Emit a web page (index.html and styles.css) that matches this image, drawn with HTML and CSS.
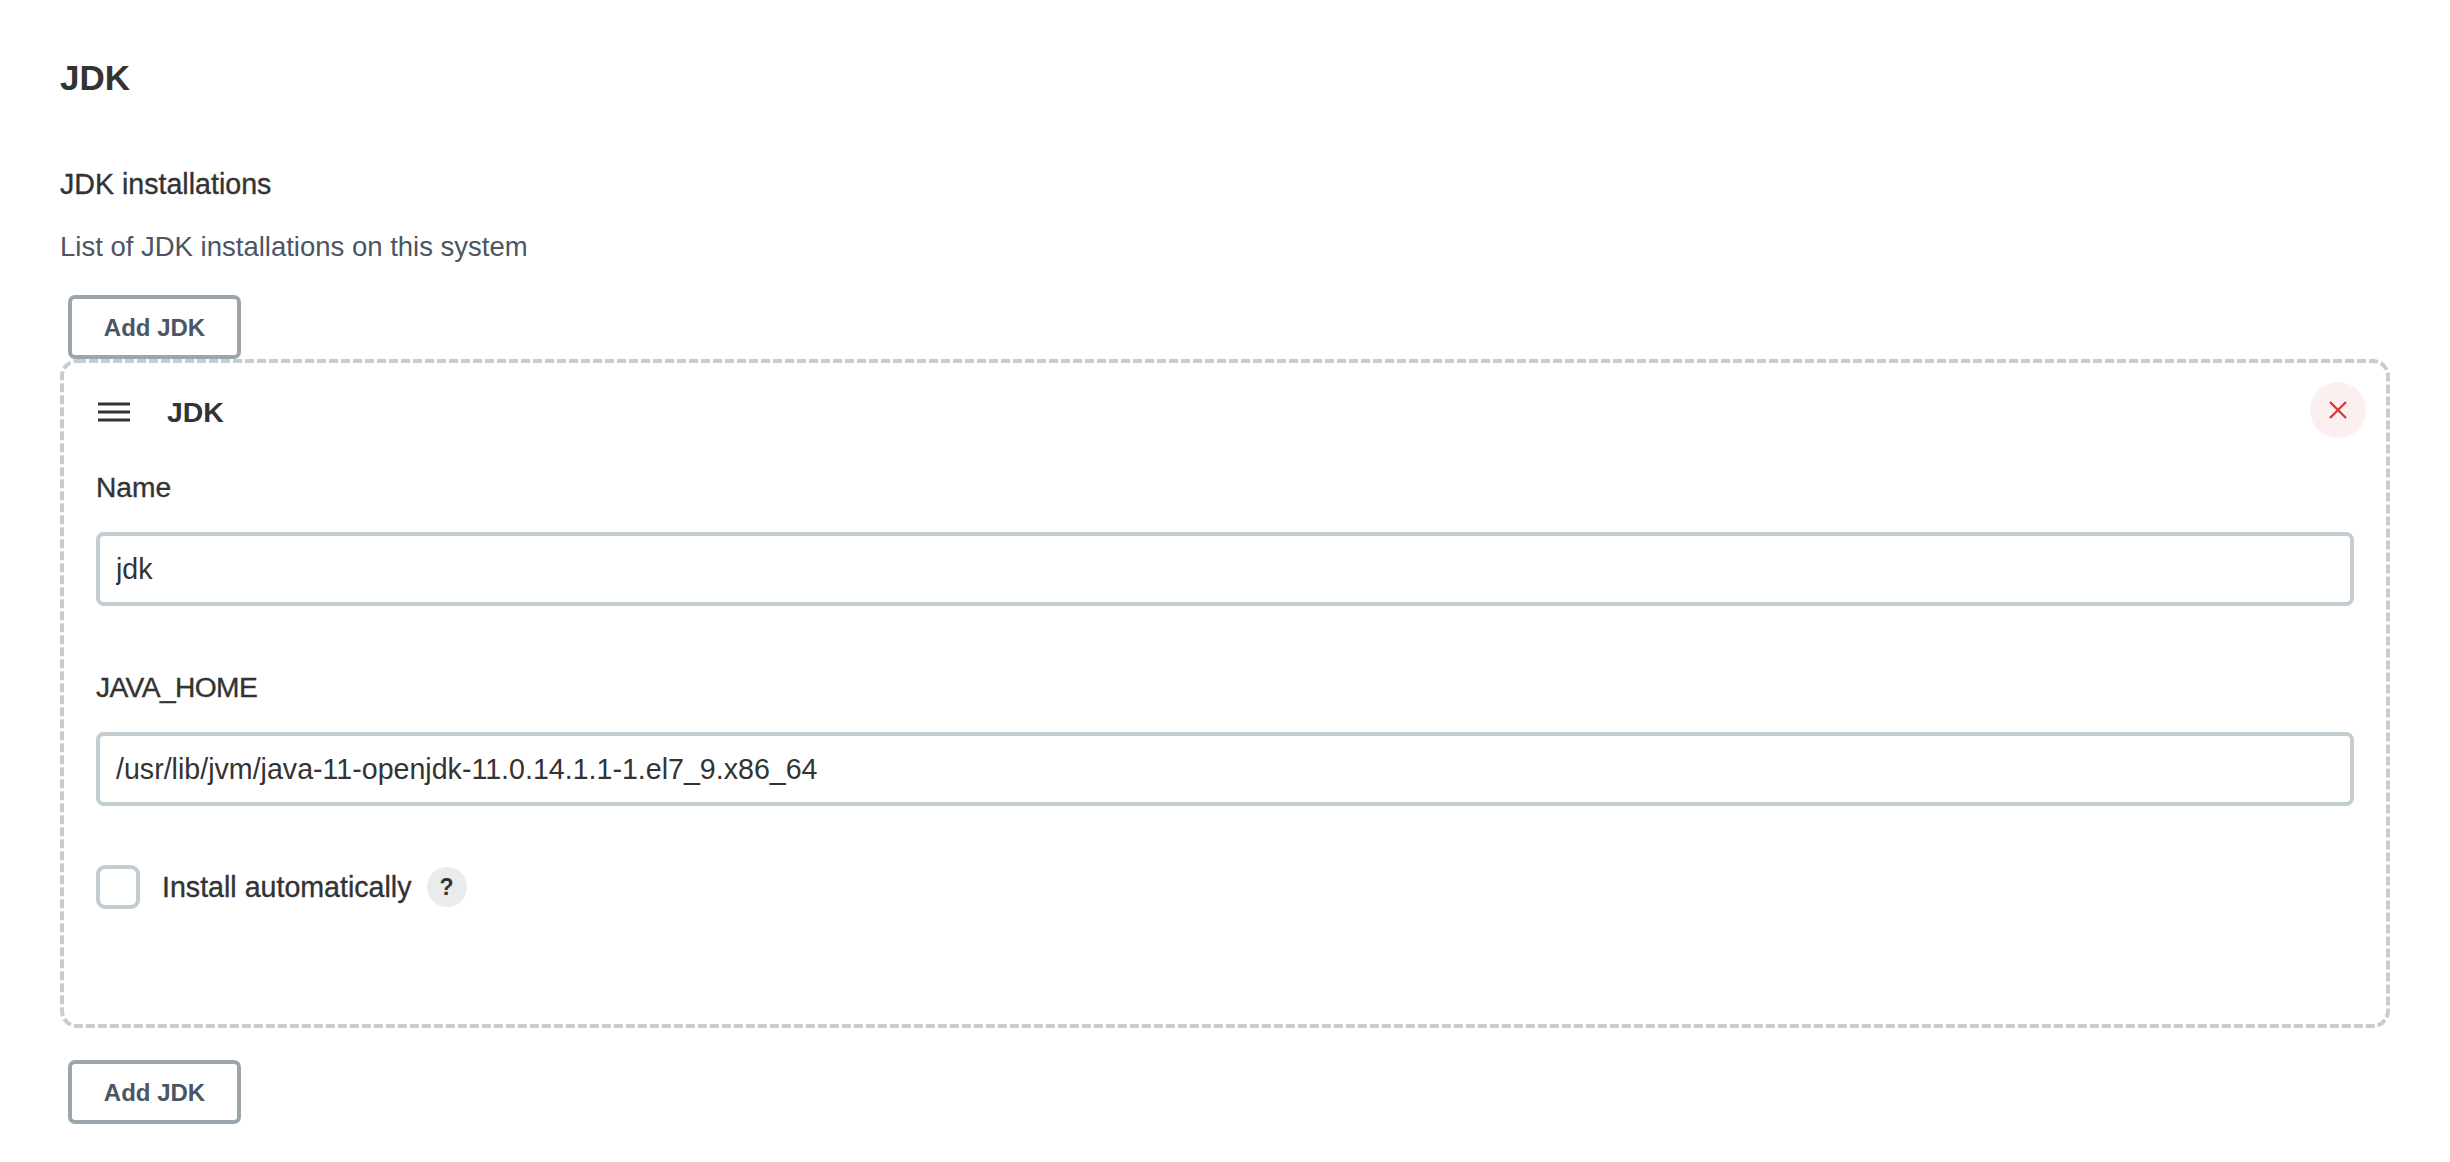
FILE: index.html
```html
<!DOCTYPE html>
<html>
<head>
    <meta name="viewport" content="width=device-width, initial-scale=1">
    <link rel="stylesheet" href="styles.css">
</head>

<body>

<div class="section">

    <h2 class="section-title">JDK</h2>

    <div class="setting-label">JDK installations</div>
    <div class="setting-desc">List of JDK installations on this system</div>

    <button type="button" class="add-btn">Add JDK</button>

    <div class="repeated">
        <svg class="dashes" width="2330" height="669" viewBox="0 0 2330 669">
            <rect x="2" y="2" width="2326" height="665" rx="15" fill="none" stroke="#c5cdd0" stroke-width="4" stroke-dasharray="9 3"/>
        </svg>

        <div class="repeated-head">
            <svg class="handle" width="32" height="20" viewBox="0 0 32 20">
                <path d="M0 2H32M0 10H32M0 18H32" stroke="#333" stroke-width="2.8" fill="none"/>
            </svg>
            <span class="repeated-title">JDK</span>
            <button type="button" class="close-btn">
                <svg width="18" height="18" viewBox="0 0 18 18">
                    <path d="M1 1L17 17M17 1L1 17" stroke="#d4342f" stroke-width="2.2" fill="none"/>
                </svg>
            </button>
        </div>

        <label class="field-label" for="name">Name</label>
        <input type="text" class="field-input" id="name" value="jdk">

        <label class="field-label field-label-caps" for="home">JAVA_HOME</label>
        <input type="text" class="field-input" id="home" value="/usr/lib/jvm/java-11-openjdk-11.0.14.1.1-1.el7_9.x86_64">

        <div class="check-row">
            <span class="check-box"></span>
            <span class="check-label">Install automatically</span>
            <span class="help">?</span>
        </div>
    </div>

    <button type="button" class="add-btn add-btn-last">Add JDK</button>

</div>

</body>
</html>
```

FILE: styles.css
```css
body {
    margin: 0;
    background-color: #fff;
    color: #333;
    font-family: "Liberation Sans", Arial, Helvetica, sans-serif;
}

.section {
    padding: 60px 60px 0 60px;
}

.section-title {
    margin: 0;
    font-size: 35px;
    line-height: 36px;
    font-weight: bold;
}

.setting-label {
    margin-top: 70px;
    font-size: 28.6px;
    line-height: 36px;
    -webkit-text-stroke: 0.35px #333;
}

.setting-desc {
    margin-top: 27px;
    font-size: 27.5px;
    line-height: 36px;
    color: #4b5563;
}

.add-btn {
    display: block;
    box-sizing: border-box;
    width: 173px;
    height: 64px;
    margin: 30px 0 0 8px;
    padding: 1px 0 0 0;
    background-color: #fff;
    border: 4px solid #9aa6ae;
    border-radius: 7px;
    color: #4b5563;
    font-family: inherit;
    font-size: 24px;
    font-weight: bold;
}

.add-btn-last {
    margin-top: 32px;
}

.repeated {
    position: relative;
    box-sizing: border-box;
    height: 669px;
    padding: 23px 36px 0 36px;
}

/* chrome's own dashed border comes out too short, so it is drawn */
.dashes {
    position: absolute;
    top: 0;
    left: 0;
}

.repeated-head {
    display: flex;
    align-items: center;
    height: 56px;
    margin-right: -12px;
}

.handle {
    margin: 4px 0 0 2px;
}

.repeated-title {
    margin: 4px 0 0 37px;
    font-size: 28.4px;
    font-weight: bold;
}

.close-btn {
    display: flex;
    align-items: center;
    justify-content: center;
    width: 56px;
    height: 56px;
    margin-left: auto;
    padding: 0;
    background-color: #fbeff0;
    border: none;
    border-radius: 50%;
}

.field-label {
    display: block;
    margin-top: 31px;
    font-size: 28.2px;
    line-height: 36px;
    -webkit-text-stroke: 0.35px #333;
}

.field-label-caps {
    letter-spacing: -0.6px;
}

.field-input {
    display: block;
    box-sizing: border-box;
    width: 100%;
    height: 74px;
    margin: 27px 0 63px 0;
    padding: 0 16px;
    background-color: #fff;
    border: 4px solid #c3ccd0;
    border-radius: 8px;
    color: #333;
    font-family: inherit;
    font-size: 28.6px;
}

.field-input + .field-label {
    margin-top: 0;
}

.check-row {
    display: flex;
    align-items: center;
    margin-top: -4px;
}

.check-box {
    box-sizing: border-box;
    width: 44px;
    height: 44px;
    border: 4px solid #c3ccd0;
    border-radius: 9px;
}

.check-label {
    margin-left: 22px;
    font-size: 28.6px;
    -webkit-text-stroke: 0.35px #333;
}

.help {
    display: flex;
    align-items: center;
    justify-content: center;
    width: 40px;
    height: 40px;
    margin-left: 15px;
    background-color: #eaebec;
    border-radius: 50%;
    font-size: 23px;
    font-weight: bold;
}
```
